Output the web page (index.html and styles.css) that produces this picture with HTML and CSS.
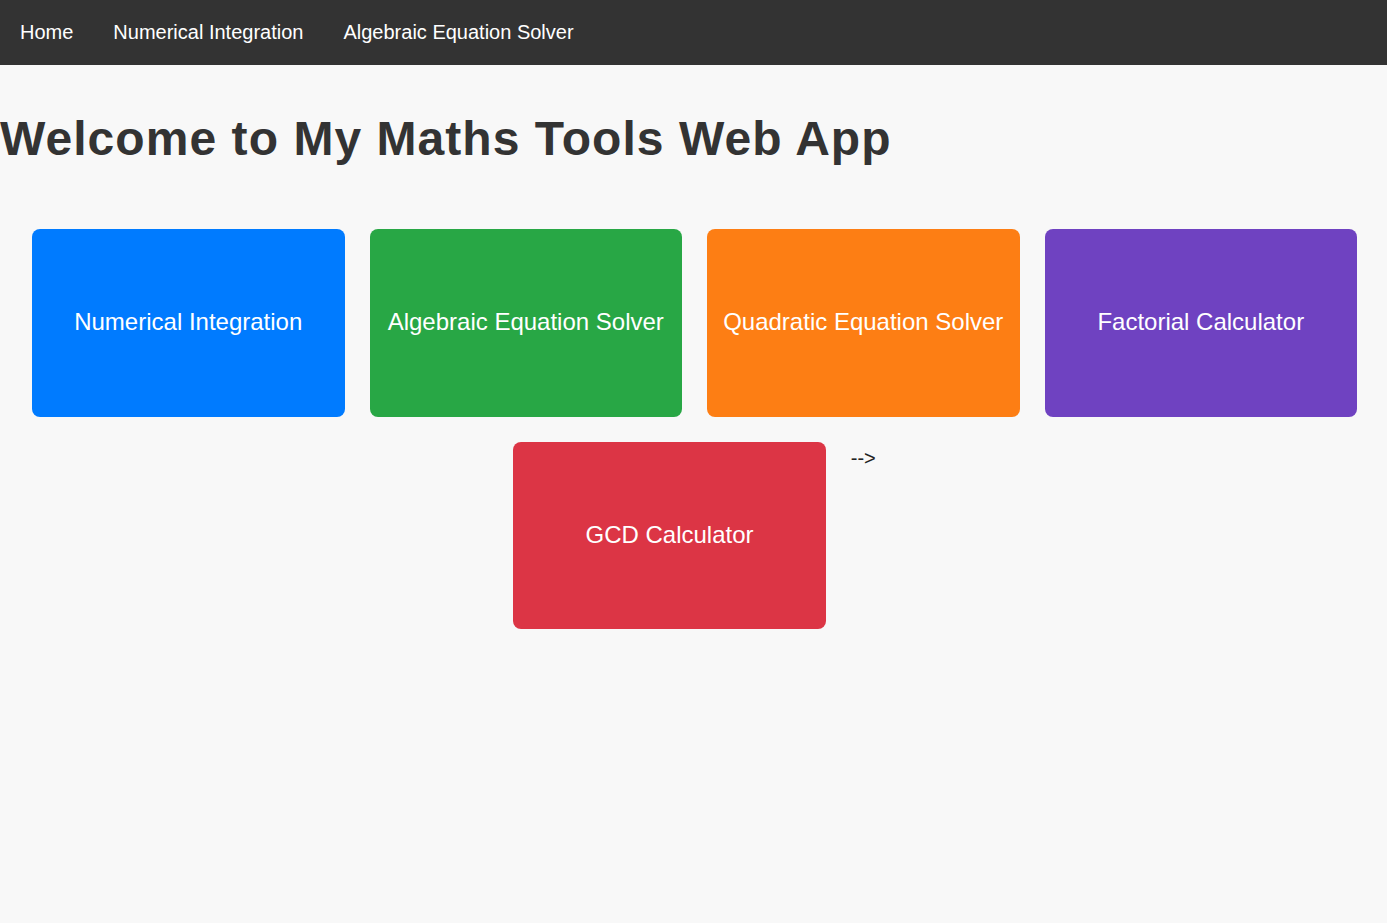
FILE: index.html
```html
<!DOCTYPE html>
<html lang="en">
<head>
<meta charset="utf-8">
<title>My Maths Tools</title>
<link rel="stylesheet" href="styles.css">
</head>
<body>
<nav class="navbar">
  <a class="nav-link" href="#">Home</a>
  <a class="nav-link" href="#">Numerical Integration</a>
  <a class="nav-link" href="#">Algebraic Equation Solver</a>
</nav>
<main class="content">
  <h1 class="title">Welcome to My Maths Tools Web App</h1>
  <div class="tools">
    <a class="tool tool-blue" href="#">Numerical Integration</a>
    <a class="tool tool-green" href="#">Algebraic Equation Solver</a>
    <a class="tool tool-orange" href="#">Quadratic Equation Solver</a>
    <a class="tool tool-purple" href="#">Factorial Calculator</a>
    <a class="tool tool-red" href="#">GCD Calculator</a>
    <span class="stray">--&gt;</span>
  </div>
</main>
</body>
</html>
```
FILE: styles.css
```css
html, body {
  margin: 0;
  padding: 0;
}
body {
  background: #f8f8f8;
  font-family: "Liberation Sans", Arial, sans-serif;
  color: #333;
}
.navbar {
  background: #333;
  display: flex;
  padding: 21px 0;
}
.nav-link {
  color: #fff;
  text-decoration: none;
  font-size: 20px;
  line-height: 23px;
  padding: 0 20px;
}
.content {
  padding: 0;
}
.title {
  margin: 47px 0 0 0;
  font-size: 48px;
  font-weight: bold;
  color: #333;
  line-height: 54px;
  letter-spacing: 1.05px;
}
.tools {
  display: flex;
  flex-wrap: wrap;
  justify-content: center;
  align-items: flex-start;
  gap: 25px;
  margin-top: 63px;
  padding-left: 2px;
}
.tool {
  width: 312.5px;
  box-sizing: border-box;
  padding: 79px 10px 81px;
  border-radius: 8px;
  color: #fff;
  text-decoration: none;
  text-align: center;
  font-size: 24px;
  line-height: 27.5px;
}
.tool-blue { background: #007bff; }
.tool-green { background: #28a745; }
.tool-orange { background: #fd7e14; }
.tool-purple { background: #6f42c1; }
.tool-red { background: #dc3545; }
.stray {
  font-size: 20px;
  line-height: 23px;
  margin-top: 5px;
  color: #222;
}
```
